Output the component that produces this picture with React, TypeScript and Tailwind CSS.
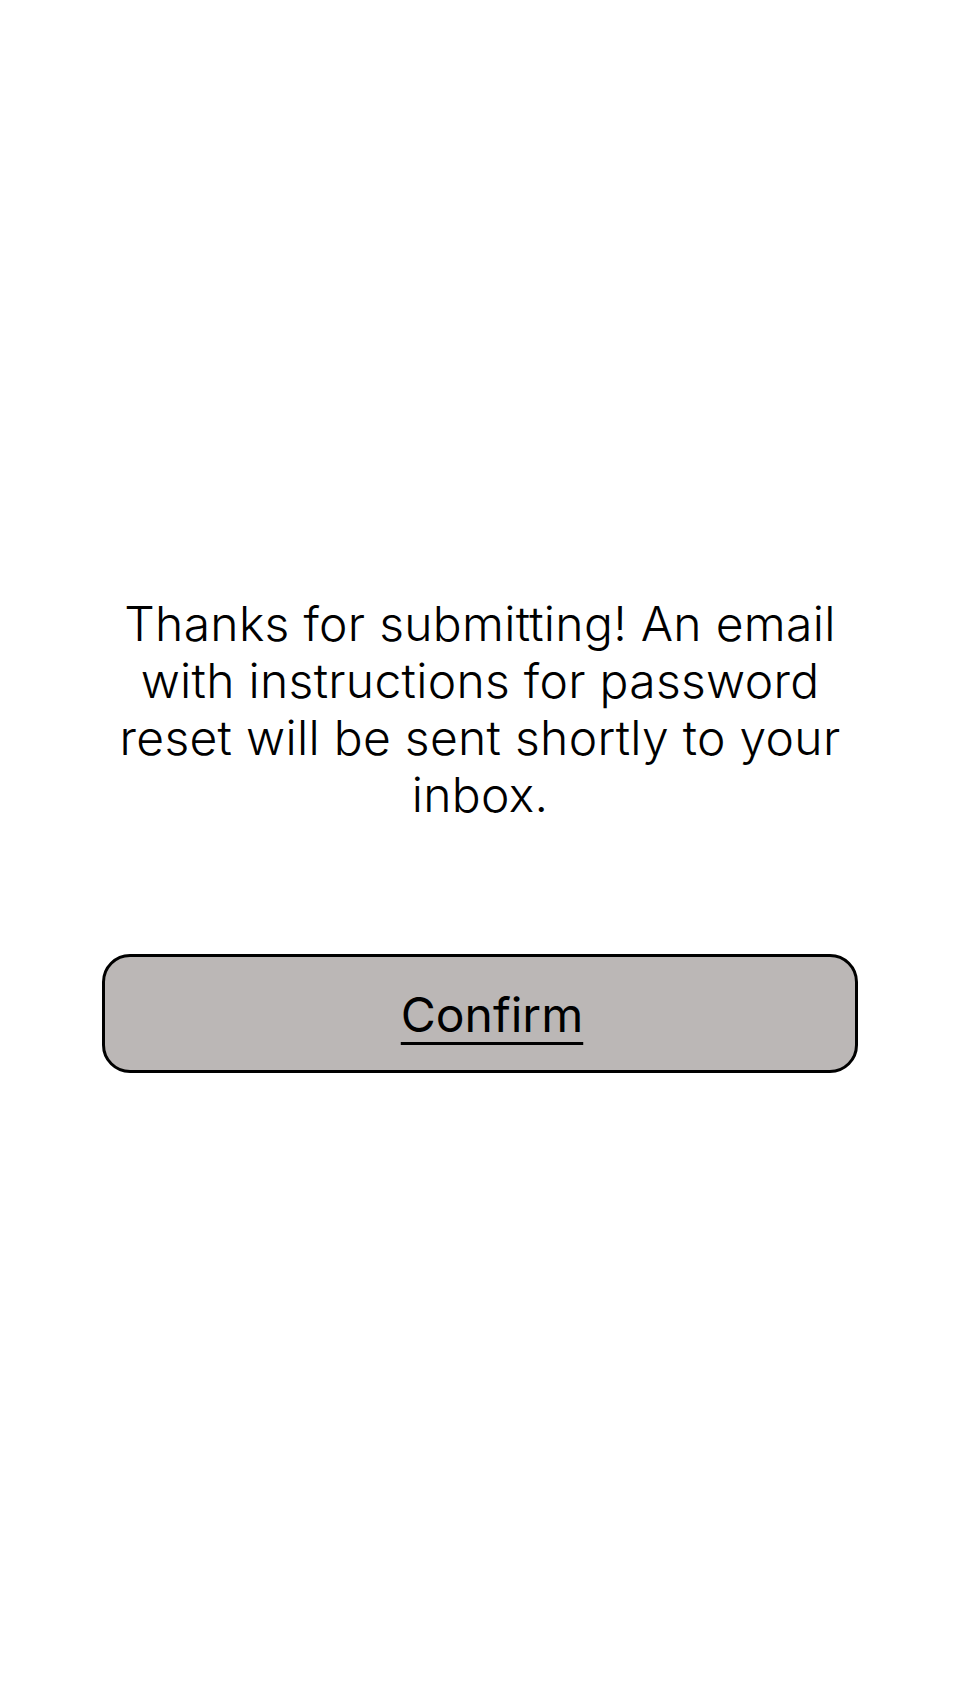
import React from 'react';

const App = () => {
  return (
    <div className="min-h-screen bg-white flex flex-col items-center pt-[595px]" style={{ fontFamily: 'Inter, "Noto Sans", sans-serif' }}>
      <p className="w-[760px] text-center text-[48px] leading-[57px] font-light tracking-[0.3px] text-black">
        Thanks for submitting! An email with instructions for password reset will be sent shortly to your inbox.
      </p>

      <button className="mt-[131px] w-[756px] h-[119px] rounded-[28px] border-[3px] border-black bg-[#bbb7b6] flex items-center justify-center pl-[24px] pt-[2px]">
        <span className="text-[48px] font-normal text-black underline underline-offset-[10px] decoration-[3px]">Confirm</span>
      </button>
    </div>
  );
};

export default App;
